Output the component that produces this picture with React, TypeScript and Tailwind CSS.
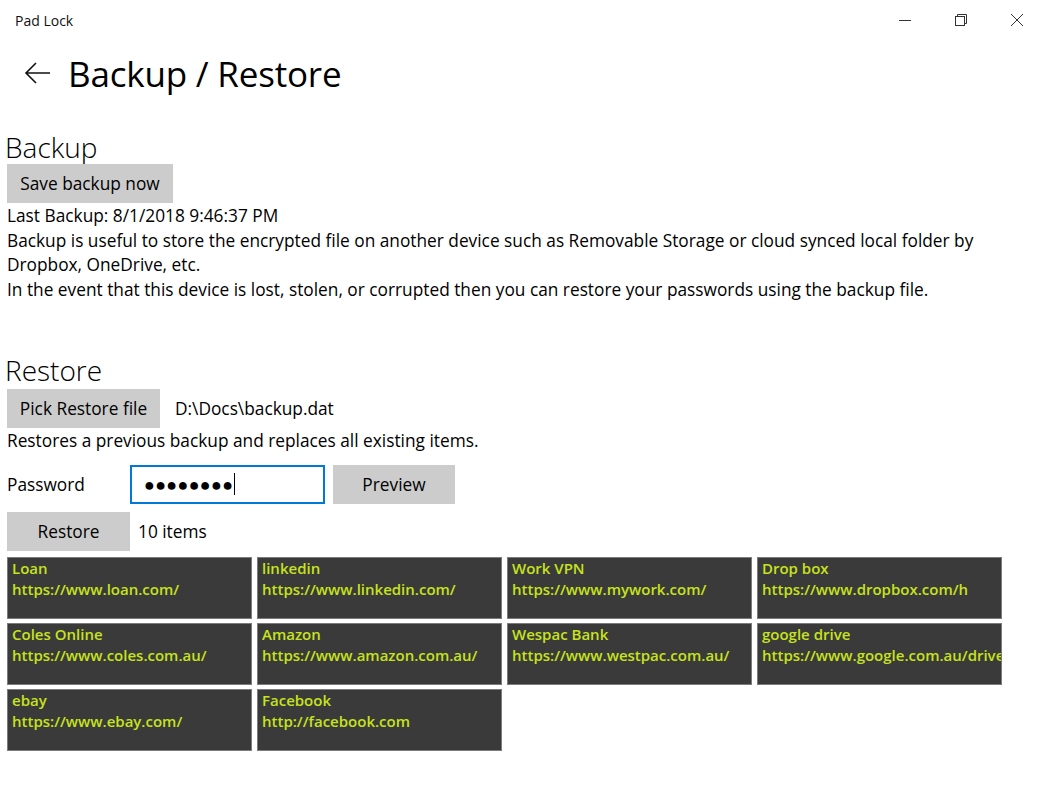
import { useState } from "react";

const ITEMS = [
  { name: "Loan", url: "https://www.loan.com/" },
  { name: "linkedin", url: "https://www.linkedin.com/" },
  { name: "Work VPN", url: "https://www.mywork.com/" },
  { name: "Drop box", url: "https://www.dropbox.com/h" },
  { name: "Coles Online", url: "https://www.coles.com.au/" },
  { name: "Amazon", url: "https://www.amazon.com.au/" },
  { name: "Wespac Bank", url: "https://www.westpac.com.au/" },
  { name: "google drive", url: "https://www.google.com.au/drive" },
  { name: "ebay", url: "https://www.ebay.com/" },
  { name: "Facebook", url: "http://facebook.com" },
];

function TitleBar() {
  return (
    <div className="flex h-10 items-center justify-between">
      <span className="pl-[15px] text-[14px] text-[#111]">Pad Lock</span>
      <div className="flex h-full">
        {/* minimise */}
        <div className="flex w-14 items-center justify-center">
          <svg width="14" height="14" viewBox="0 0 14 14">
            <path d="M1 7.5h12" stroke="#333" strokeWidth="1" />
          </svg>
        </div>
        {/* restore */}
        <div className="flex w-14 items-center justify-center">
          <svg width="14" height="14" viewBox="0 0 14 14" fill="none" stroke="#333" strokeWidth="1">
            <rect x="1.5" y="3.5" width="9" height="9" />
            <path d="M3.5 3.5V1.5h9v9h-2" />
          </svg>
        </div>
        {/* close */}
        <div className="flex w-14 items-center justify-center">
          <svg width="14" height="14" viewBox="0 0 14 14" stroke="#333" strokeWidth="1">
            <path d="M1 1l12 12M13 1L1 13" />
          </svg>
        </div>
      </div>
    </div>
  );
}

function GrayButton({ children, className }: { children: React.ReactNode; className: string }) {
  return (
    <button className={`h-[39px] bg-[#cccccc] text-[17.3px] text-black ${className}`}>{children}</button>
  );
}

export default function App() {
  const [password] = useState("●●●●●●●●");

  return (
    <div
      className="min-h-screen w-[1045px] bg-white text-black"
      style={{ fontFamily: '"Open Sans", "Noto Sans", sans-serif' }}
    >
      <TitleBar />

      {/* Page header */}
      <div className="flex h-[66px] items-center">
        <button className="ml-[24px] flex h-8 w-8 items-center justify-start">
          <svg width="27" height="22" viewBox="0 0 27 22" fill="none" stroke="#111" strokeWidth="1.6">
            <path d="M26 11H2M12 1L2 11l10 10" />
          </svg>
        </button>
        <h1 className="ml-[12px] text-[35px] font-normal leading-none tracking-[-0.2px]">Backup / Restore</h1>
      </div>

      <div className="px-[7px]">
        {/* Backup */}
        <h2 className="-ml-[2px] mt-[24px] text-[28px] font-light leading-[34px]">Backup</h2>
        <GrayButton className="w-[166px]">Save backup now</GrayButton>
        <div className="mt-[1px] text-[17.3px] leading-[24.6px]">
          <p>Last Backup: 8/1/2018 9:46:37 PM</p>
          <p className="pr-[40px]">
            Backup is useful to store the encrypted file on another device such as Removable Storage or cloud synced local
            folder by Dropbox, OneDrive, etc.
          </p>
          <p>In the event that this device is lost, stolen, or corrupted then you can restore your passwords using the backup file.</p>
        </div>

        {/* Restore */}
        <h2 className="-ml-[2px] mt-[51px] text-[28px] font-light leading-[34px]">Restore</h2>
        <div className="mt-[2px] flex items-center">
          <GrayButton className="w-[153px]">Pick Restore file</GrayButton>
          <span className="ml-[15px] text-[17.3px]">D:\Docs\backup.dat</span>
        </div>
        <p className="mt-[1px] text-[17.3px] leading-[24.6px]">Restores a previous backup and replaces all existing items.</p>

        <div className="mt-[11px] flex items-center">
          <span className="w-[123px] text-[17.3px]">Password</span>
          <div className="flex h-[39px] w-[195px] items-center border-2 border-[#0078d7] pl-[12px]">
            <span className="text-[18px] leading-none tracking-[0.3px]">{password}</span>
            <span className="ml-[1px] h-[22px] w-px bg-black" />
          </div>
          <GrayButton className="ml-[8px] w-[122px]">Preview</GrayButton>
        </div>

        <div className="mt-[8px] flex items-center">
          <GrayButton className="w-[123px]">Restore</GrayButton>
          <span className="ml-[8px] text-[17.3px]">10 items</span>
        </div>

        {/* Items */}
        <div className="mt-[6px] grid w-[995px] grid-cols-4 gap-x-[5px] gap-y-[4px]">
          {ITEMS.map((it) => (
            <div
              key={it.name}
              className="h-[62px] overflow-hidden border border-[#7c7c7c] bg-[#3a3a3a] pl-[4px] text-[15px] font-semibold leading-[21px] text-[#c6e31c]"
            >
              <div className="whitespace-nowrap">{it.name}</div>
              <div className="whitespace-nowrap">{it.url}</div>
            </div>
          ))}
        </div>
      </div>
    </div>
  );
}
